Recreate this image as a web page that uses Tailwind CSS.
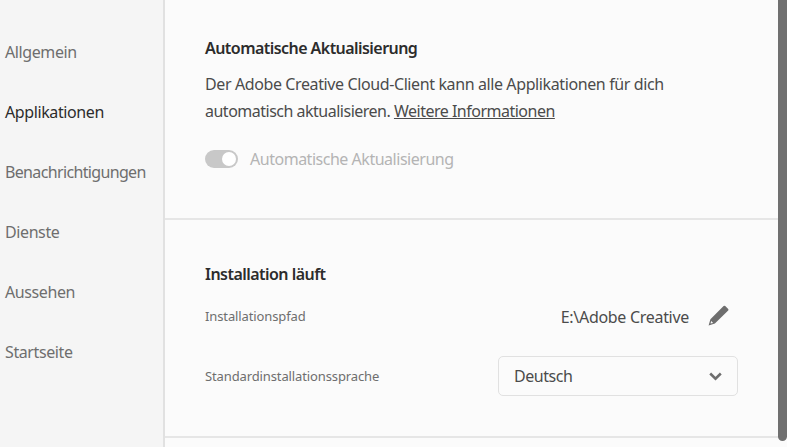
<!DOCTYPE html>
<html lang="de">
<head>
  <meta charset="UTF-8">
  <title>Einstellungen</title>
  <script src="https://cdn.jsdelivr.net/npm/@tailwindcss/browser@4"></script>
</head>
<body class="h-screen overflow-hidden bg-[#fbfbfb] font-['Noto_Sans',sans-serif] text-[#4b4b4b]">
  <div class="flex h-[447px]">
    <!-- Sidebar -->
    <nav class="w-[165px] shrink-0 bg-[#f5f5f5] border-r-2 border-[#e1e1e1] pt-[22px] pl-[5px] text-[16px] tracking-[-0.4px] text-[#6e6e6e]">
      <div class="h-[60px] leading-[60px]">Allgemein</div>
      <div class="h-[60px] leading-[60px] text-[#2c2c2c]">Applikationen</div>
      <div class="h-[60px] leading-[60px] tracking-[-0.65px]">Benachrichtigungen</div>
      <div class="h-[60px] leading-[60px]">Dienste</div>
      <div class="h-[60px] leading-[60px]">Aussehen</div>
      <div class="h-[60px] leading-[60px]">Startseite</div>
    </nav>

    <!-- Main -->
    <main class="flex-1 min-w-0">
      <section class="h-[220px] border-b-2 border-[#e6e6e6] pl-[40px] pt-[37px]">
        <h2 class="text-[16px] leading-[22px] font-semibold tracking-[-0.55px] text-[#2c2c2c]">Automatische Aktualisierung</h2>
        <p class="mt-[12px] text-[16px] leading-[27px] text-[#4b4b4b]">
          <span class="tracking-[-0.39px]">Der Adobe Creative Cloud-Client kann alle Applikationen für dich</span><br>
          <span class="tracking-[-0.5px]">automatisch aktualisieren. <a class="underline">Weitere Informationen</a></span>
        </p>
        <div class="mt-[23px] flex items-center gap-[12px]">
          <span class="flex items-center justify-end w-[33px] h-[18px] rounded-full bg-[#c8c8c8] pr-[2px]">
            <span class="w-[14px] h-[14px] rounded-full bg-white"></span>
          </span>
          <span class="text-[16px] leading-[22px] tracking-[-0.48px] text-[#b4b4b4]">Automatische Aktualisierung</span>
        </div>
      </section>

      <section class="h-[218px] border-b-2 border-[#e6e6e6] pl-[40px] pr-[49px] pt-[43px]">
        <h2 class="text-[16px] leading-[22px] font-semibold tracking-[-0.53px] text-[#2c2c2c]">Installation läuft</h2>
        <div class="mt-[11px] h-[40px] flex items-center justify-between">
          <span class="pt-[2px] text-[13px] tracking-[-0.12px] text-[#6e6e6e]">Installationspfad</span>
          <span class="flex items-center">
            <span class="pt-[2px] text-[16px] tracking-[-0.3px] text-[#4b4b4b]">E:\Adobe Creative</span>
            <svg class="ml-[19px] mr-[9px] mb-[2px]" width="21" height="21" viewBox="0 0 21 21" fill="#6e6e6e">
              <path fill-rule="evenodd" d="M15.6 1 Q16.4 0.5 17.2 1.1 L20.2 3.9 Q20.8 4.7 20.2 5.4 L6.9 18.6 L0.6 20.6 L2.4 14.2 Z M3.2 16 L2.5 18.6 L5.1 17.9 Z"/>
            </svg>
          </span>
        </div>
        <div class="mt-[20px] h-[40px] flex items-center justify-between">
          <span class="pt-[2px] text-[13px] tracking-[-0.12px] text-[#6e6e6e]">Standardinstallationssprache</span>
          <div class="w-[240px] h-[40px] flex items-center justify-between rounded-[5px] border border-[#e1e1e1] bg-[#fbfbfb] pl-[15px] pr-[15px]">
            <span class="text-[16px] tracking-[-0.45px] text-[#4b4b4b]">Deutsch</span>
            <svg width="13" height="9" viewBox="0 0 13 9" fill="none" stroke="#6e6e6e" stroke-width="2.6">
              <path d="M1.2 1.5 L6.5 6.6 L11.8 1.5"/>
            </svg>
          </div>
        </div>
      </section>
    </main>
  </div>
  <!-- Scrollbar -->
  <div class="absolute top-0 right-0 w-[9px] h-[441px] rounded-b-full bg-[#707070]"></div>
</body>
</html>
